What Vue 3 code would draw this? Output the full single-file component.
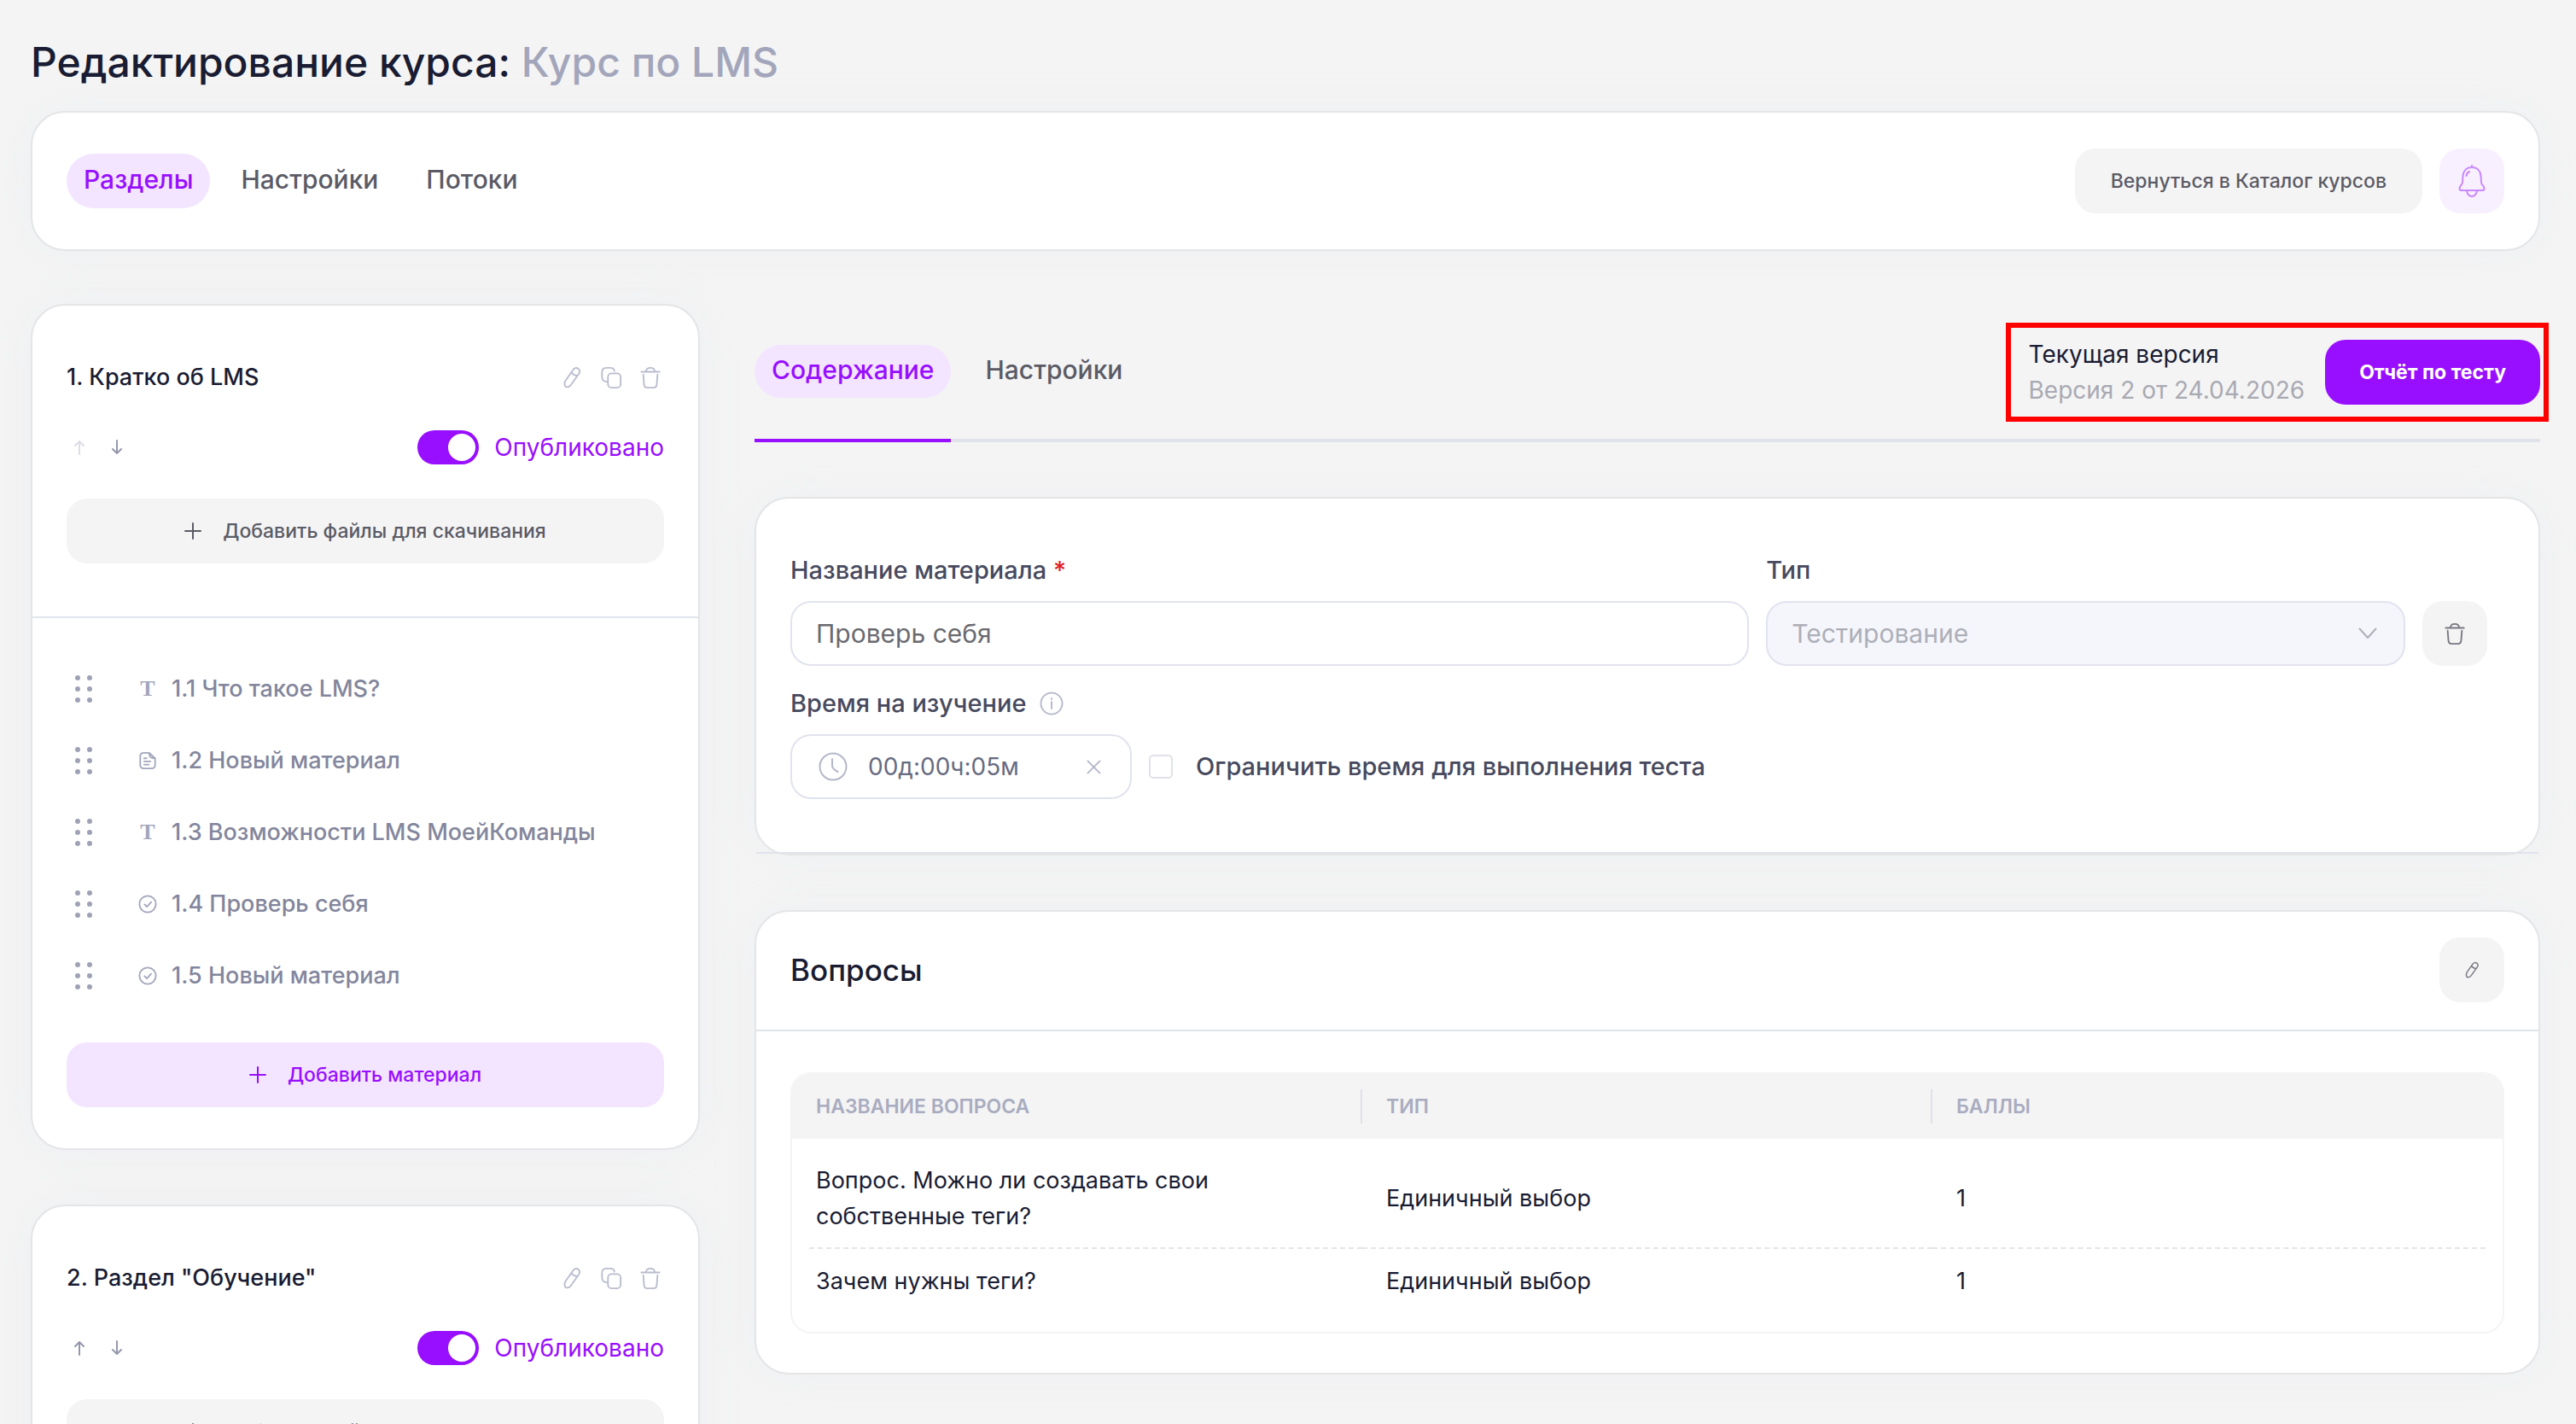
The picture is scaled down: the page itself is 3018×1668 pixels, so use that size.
<!-- CourseEditor.vue -->
<template>
<div class="page">
    <!-- Иконки -->
    <svg class="sprite" aria-hidden="true">
        <symbol id="i-pencil" viewBox="0 0 24 28">
            <path d="M13.5 4.5C15 2 18 1.500 20 3c2.200 1.500 2.500 4 1 6.200L10.500 24c-1.500 1.800-4 2.500-6.500 2-1.500-3-1.500-5.500-.3-7.500zM11.500 7.500c1.500 2.800 4 4.300 7.500 4.300" />
        </symbol>
        <symbol id="i-copy" viewBox="0 0 28 28">
            <rect x="10" y="9" width="16" height="18" rx="4.500" />
            <path d="M9.500 19.500H8.500C4.500 19.500 2.500 17 2.500 13.500V7.500C2.500 4 4.500 2 8 2h5c3.500 0 5 1.500 5 4" />
        </symbol>
        <symbol id="i-trash" viewBox="0 0 28 28">
            <path d="M2.500 7h23M8.500 7C8.500 3.500 10.500 2 14 2s5.500 1.500 5.500 5M5 10.500l1 12.500c.3 3 1.500 4 4 4h8c2.500 0 3.700-1 4-4l1-12.500" />
        </symbol>
        <symbol id="i-up" viewBox="0 0 16 18">
            <path d="M8 17V2M3 7l5-5 5 5" />
        </symbol>
        <symbol id="i-down" viewBox="0 0 16 18">
            <path d="M8 1v15M3 11l5 5 5-5" />
        </symbol>
        <symbol id="i-plus" viewBox="0 0 20 20">
            <path d="M10 1v18M1 10h18" />
        </symbol>
        <symbol id="i-grip" viewBox="0 0 22 36">
            <g fill="currentColor" stroke="none">
                <circle cx="4" cy="5" r="3" /><circle cx="18" cy="5" r="3" />
                <circle cx="4" cy="18" r="3" /><circle cx="18" cy="18" r="3" />
                <circle cx="4" cy="31" r="3" /><circle cx="18" cy="31" r="3" />
            </g>
        </symbol>
        <symbol id="i-file" viewBox="0 0 24 24">
            <path d="M14 2H7C4 2 2.500 3.500 2.500 6.500v11C2.500 20.500 4 22 7 22h10c3 0 4.500-1.500 4.500-4.500V9zM14 2c0 5 1.500 7 7.500 7M7.500 9h3M7.500 13h8M7.500 17h6" />
        </symbol>
        <symbol id="i-check" viewBox="0 0 24 24">
            <circle cx="12" cy="12" r="10.500" />
            <path d="M8 12.500l3 3 5.500-6" />
        </symbol>
        <symbol id="i-bell" viewBox="0 0 32 38">
            <path d="M16 1v2M16 3C9.500 3 6 7.500 5.500 13L5 20.500C4.800 24 1.500 24.500 1.500 28c0 1.300.8 2 2.200 2h24.600c1.400 0 2.200-.7 2.200-2 0-3.500-3.300-4-3.500-7.500L26.500 13C26 7.500 22.500 3 16 3zM10 30.500c.8 4 3 6.500 6 6.500s5.200-2.500 6-6.500M9.500 13c.3-2.300 1.500-4 3.500-5" />
        </symbol>
        <symbol id="i-info" viewBox="0 0 28 28">
            <circle cx="14" cy="14" r="12.500" />
            <path d="M14 12v8M14 8v1" />
        </symbol>
        <symbol id="i-clock" viewBox="0 0 34 34">
            <circle cx="17" cy="17" r="15.500" />
            <path d="M16 8v8c0 3 1.500 4.500 6.500 7" />
        </symbol>
        <symbol id="i-close" viewBox="0 0 18 18">
            <path d="M1.500 1.500l15 15M16.500 1.500l-15 15" />
        </symbol>
        <symbol id="i-chevron" viewBox="0 0 22 14">
            <path d="M1.500 1.500L11 12l9.500-10.500" />
        </symbol>
    </svg>

    <h1 class="page-title">Редактирование курса: <span>Курс по LMS</span></h1>

    <header class="card topbar">
        <nav class="topbar-nav">
            <a v-for="(item, i) in menu" :key="item" href="#" class="pill" :class="{ active: i === 0 }">{{ item }}</a>
        </nav>
        <div class="topbar-actions">
            <button type="button" class="btn btn-grey">Вернуться в Каталог курсов</button>
            <button type="button" class="btn btn-icon btn-bell" aria-label="Уведомления">
                <svg class="icon-bell"><use href="#i-bell" /></svg>
            </button>
        </div>
    </header>

    <div class="layout">
        <aside class="sidebar">
            <section v-for="section in sections" :key="section.title" class="card section">
                <div class="section-head">
                    <div class="row">
                        <h2 class="section-title">{{ section.title }}</h2>
                        <div class="section-tools">
                            <button type="button" class="tool" aria-label="Изменить"><svg><use href="#i-pencil" /></svg></button>
                            <button type="button" class="tool" aria-label="Копировать"><svg><use href="#i-copy" /></svg></button>
                            <button type="button" class="tool" aria-label="Удалить"><svg><use href="#i-trash" /></svg></button>
                        </div>
                    </div>
                    <div class="row row-publish">
                        <div class="arrows">
                            <button type="button" class="arrow" :disabled="section.first" aria-label="Выше"><svg><use href="#i-up" /></svg></button>
                            <button type="button" class="arrow" aria-label="Ниже"><svg><use href="#i-down" /></svg></button>
                        </div>
                        <label class="switch">
                            <input v-model="section.published" type="checkbox" role="switch">
                            Опубликовано
                        </label>
                    </div>
                    <button type="button" class="btn btn-grey btn-wide">
                        <svg class="icon-plus"><use href="#i-plus" /></svg>
                        Добавить файлы для скачивания
                    </button>
                </div>
                <div class="section-body">
                    <ul class="materials">
                        <li v-for="item in section.materials" :key="item.name" class="material">
                            <svg class="grip"><use href="#i-grip" /></svg>
                            <span v-if="item.icon === 'text'" class="material-icon material-text">T</span>
                            <svg v-else class="material-icon"><use :href="'#i-' + item.icon" /></svg>
                            <a href="#">{{ item.name }}</a>
                        </li>
                    </ul>
                    <button type="button" class="btn btn-light btn-wide">
                        <svg class="icon-plus"><use href="#i-plus" /></svg>
                        Добавить материал
                    </button>
                </div>
            </section>
        </aside>

        <main class="content">
            <div class="tabs">
                <nav class="tabs-nav">
                    <div v-for="(tab, i) in tabs" :key="tab" class="tab" :class="{ current: i === 0 }">
                        <a href="#" class="pill" :class="{ active: i === 0 }">{{ tab }}</a>
                    </div>
                </nav>
                <div class="version">
                    <div class="version-text">
                        <div>Текущая версия</div>
                        <div class="version-date">Версия 2 от 24.04.2026</div>
                    </div>
                    <button type="button" class="btn btn-primary">Отчёт по тесту</button>
                </div>
            </div>

            <section class="card">
                <form class="form" @submit.prevent>
                    <div class="form-grid">
                        <div class="field">
                            <label for="name">Название материала <span class="required">*</span></label>
                            <input id="name" v-model="name" type="text" class="control">
                        </div>
                        <div class="field">
                            <label for="type">Тип</label>
                            <div class="control control-disabled">
                                <select id="type" disabled>
                                    <option>Тестирование</option>
                                </select>
                                <svg class="icon-chevron"><use href="#i-chevron" /></svg>
                            </div>
                        </div>
                        <button type="button" class="btn btn-grey btn-icon" aria-label="Удалить материал">
                            <svg class="icon-trash"><use href="#i-trash" /></svg>
                        </button>
                    </div>
                    <div class="field">
                        <div class="label-row">
                            <label for="time">Время на изучение</label>
                            <svg class="icon-info"><use href="#i-info" /></svg>
                        </div>
                        <div class="time-row">
                            <div class="control control-time">
                                <svg class="icon-clock"><use href="#i-clock" /></svg>
                                <input id="time" v-model="time" type="text">
                                <button type="button" class="clear" aria-label="Очистить"><svg><use href="#i-close" /></svg></button>
                            </div>
                            <label class="checkbox">
                                <input v-model="limited" type="checkbox">
                                Ограничить время для выполнения теста
                            </label>
                        </div>
                    </div>
                </form>
            </section>

            <section class="card">
                <div class="questions-head">
                    <h2>Вопросы</h2>
                    <button type="button" class="btn btn-grey btn-icon" aria-label="Изменить вопросы">
                        <svg class="icon-edit"><use href="#i-pencil" /></svg>
                    </button>
                </div>
                <div class="questions-body">
                    <div class="table-wrap">
                        <table>
                            <thead>
                                <tr>
                                    <th>Название вопроса</th>
                                    <th>Тип</th>
                                    <th>Баллы</th>
                                </tr>
                            </thead>
                            <tbody>
                                <tr v-for="q in questions" :key="q.text">
                                    <td>{{ q.text }}</td>
                                    <td>{{ q.type }}</td>
                                    <td>{{ q.points }}</td>
                                </tr>
                            </tbody>
                        </table>
                    </div>
                </div>
            </section>
        </main>
    </div>
</div>
</template>

<script setup>
import { ref } from 'vue'

const menu = ['Разделы', 'Настройки', 'Потоки']
const tabs = ['Содержание', 'Настройки']

const name = ref('Проверь себя')
const time = ref('00д:00ч:05м')
const limited = ref(false)

const sections = ref([
    {
        title: '1. Кратко об LMS',
        first: true,
        published: true,
        materials: [
            { name: '1.1 Что такое LMS?', icon: 'text' },
            { name: '1.2 Новый материал', icon: 'file' },
            { name: '1.3 Возможности LMS МоейКоманды', icon: 'text' },
            { name: '1.4 Проверь себя', icon: 'check' },
            { name: '1.5 Новый материал', icon: 'check' }
        ]
    },
    {
        title: '2. Раздел "Обучение"',
        first: false,
        published: true,
        materials: []
    }
])

const questions = [
    { text: 'Вопрос. Можно ли создавать свои собственные теги?', type: 'Единичный выбор', points: 1 },
    { text: 'Зачем нужны теги?', type: 'Единичный выбор', points: 1 }
]
</script>

<style>
body {
    background-color: #f4f4f4;
}
</style>

<style scoped>
* {
    box-sizing: border-box;
}

.page {
    height: 100vh;
    overflow: hidden;
    padding: 43px 42px 0 36px;
    font-family: Inter, "Liberation Sans", sans-serif;
    font-size: 28px;
    line-height: 42px;
    color: #191c32;
}

.sprite {
    display: none;
}

svg {
    display: block;
    flex: none;
    fill: none;
    stroke: currentColor;
    stroke-width: 2;
    stroke-linecap: round;
    stroke-linejoin: round;
}

button,
input,
select {
    font: inherit;
    color: inherit;
}

button {
    border: 0;
    padding: 0;
    background: none;
    cursor: pointer;
}

a {
    color: inherit;
    text-decoration: none;
}

h1,
h2 {
    margin: 0;
    font-weight: 500;
}

.page-title {
    margin-bottom: 27px;
    font-size: 48px;
    line-height: 60px;
}

.page-title span {
    color: #a3a6bb;
}

.card {
    background-color: #fff;
    border: 2px solid #e4e5e7;
    border-radius: 40px;
    box-shadow: 0 0 50px rgba(226, 232, 242, 0.3);
}

/* Кнопки */
.btn {
    display: flex;
    align-items: center;
    justify-content: center;
    height: 76px;
    padding: 0 40px;
    border-radius: 24px;
    font-size: 23px;
    font-weight: 500;
    white-space: nowrap;
}

.btn-grey {
    background-color: #f4f4f4;
    color: #5b5b66;
}

.btn-light {
    background-color: #f3e5ff;
    color: #980fff;
}

.btn-primary {
    background-color: #980fff;
    color: #fff;
    font-weight: 700;
}

.btn-wide {
    width: 100%;
    gap: 25px;
}

.btn-icon {
    width: 76px;
    padding: 0;
}

.btn-bell {
    background-color: #f8f0ff;
    color: #c987ff;
}

.icon-plus {
    width: 20px;
    height: 20px;
}

.icon-bell {
    width: 32px;
    height: 38px;
}

/* Верхняя панель */
.topbar {
    display: flex;
    align-items: center;
    justify-content: space-between;
    padding: 42px 40px;
}

.topbar-nav {
    display: flex;
    gap: 16px;
}

.topbar-actions {
    display: flex;
    gap: 20px;
}

.topbar-actions .btn-grey {
    padding: 0 42px;
}

.pill {
    display: flex;
    align-items: center;
    height: 64px;
    padding: 0 20px 4px;
    border-radius: 32px;
    font-size: 30px;
    font-weight: 500;
    color: #5b5b66;
}

.pill.active {
    background-color: #f3e5ff;
    color: #980fff;
}

.layout {
    display: grid;
    grid-template-columns: 784px 1fr;
    gap: 64px;
    align-items: start;
    margin-top: 62px;
}

.sidebar,
.content {
    display: flex;
    flex-direction: column;
    gap: 64px;
    min-width: 0;
}

/* Раздел курса */
.section-head {
    padding: 64px 40px 62px;
    border-bottom: 2px solid #e2e5ec;
}

.row {
    display: flex;
    align-items: center;
    justify-content: space-between;
    height: 40px;
}

.row-publish {
    margin: 42px 0 40px;
}

.section-title {
    font-size: 27px;
}

.section-tools {
    display: flex;
    gap: 18px;
    padding-right: 2px;
}

.tool {
    color: #b9bccd;
}

.tool svg {
    width: 28px;
    height: 26px;
}

.arrows {
    display: flex;
    gap: 28px;
    padding-left: 7px;
}

.arrow {
    color: #9497ac;
}

.arrow:disabled {
    color: #dcdde6;
}

.arrow svg {
    width: 16px;
    height: 18px;
}

.switch {
    display: flex;
    align-items: center;
    gap: 18px;
    color: #980fff;
}

.switch input {
    appearance: none;
    display: flex;
    justify-content: flex-start;
    width: 72px;
    height: 40px;
    margin: 0;
    padding: 4px;
    border-radius: 20px;
    background-color: #c9cbd8;
}

.switch input:checked {
    justify-content: flex-end;
    background-color: #980fff;
}

.switch input::before {
    content: "";
    width: 32px;
    height: 32px;
    border-radius: 50%;
    background-color: #fff;
}

.section-body {
    padding: 41px 40px 48px;
}

.materials {
    margin: 0 0 36px;
    padding: 0 0 0 9px;
    list-style: none;
}

.material {
    display: flex;
    align-items: center;
    height: 84px;
    font-size: 27px;
    font-weight: 500;
    color: #83869c;
}

.grip {
    width: 22px;
    height: 36px;
    color: #9fa2b6;
}

.material-icon {
    width: 22px;
    height: 22px;
    margin: 0 17px 0 53px;
    color: #a3a6bb;
}

.material-text {
    font-family: "Liberation Serif", serif;
    font-size: 26px;
    font-weight: 700;
    line-height: 22px;
    text-align: center;
}

/* Вкладки */
.tabs {
    display: flex;
    justify-content: space-between;
    padding-top: 38px;
    border-bottom: 4px solid #e1e3eb;
}

.tabs-nav {
    display: flex;
    gap: 20px;
}

.tab {
    padding-top: 10px;
    margin-bottom: -4px;
}

.tab.current {
    border-bottom: 4px solid #980fff;
}

.tab .pill {
    height: 62px;
}

.version {
    position: relative;
    display: flex;
    align-items: center;
    gap: 24px;
    margin-bottom: 36px;
}

/* Рамка выделяет версию и отчёт */
.version::before {
    content: "";
    position: absolute;
    inset: -16px -10px -16px -27px;
    border: 6px solid #f00;
    pointer-events: none;
}

.version-date {
    color: #a9a9b2;
}

/* Форма */
.form {
    display: flex;
    flex-direction: column;
    gap: 24px;
    padding: 64px 60px 62px 40px;
    border-bottom: 2px solid #e1e3eb;
}

.form-grid {
    display: grid;
    grid-template-columns: 3fr 2fr 76px;
    gap: 20px;
    align-items: end;
}

.field {
    display: flex;
    flex-direction: column;
    gap: 16px;
    min-width: 0;
}

.field label {
    font-size: 29px;
    font-weight: 500;
    line-height: 40px;
    color: #474a5e;
}

.required {
    color: #e01f26;
}

.control {
    display: flex;
    align-items: center;
    width: 100%;
    height: 76px;
    padding: 0 28px;
    border: 2px solid #e1e3ee;
    border-radius: 24px;
    background-color: #fff;
    font-size: 30px;
    color: #6a6a70;
    outline: none;
}

.control-disabled {
    background-color: #f5f6fb;
    color: #adafb8;
}

.control select {
    flex: 1;
    appearance: none;
    border: 0;
    padding: 0;
    background: none;
    opacity: 1;
}

.icon-chevron {
    width: 22px;
    height: 14px;
    margin-right: 3px;
    color: #adafb8;
}

.icon-trash {
    width: 26px;
    height: 28px;
    color: #777781;
}

.label-row {
    display: flex;
    align-items: center;
    gap: 16px;
}

.icon-info {
    width: 28px;
    height: 28px;
    color: #b9bccd;
}

.time-row {
    display: flex;
    align-items: center;
    gap: 20px;
}

.control-time {
    width: 400px;
    padding: 0 34px 0 31px;
    font-size: 28px;
    color: #676b80;
}

.control-time input {
    flex: 1;
    min-width: 0;
    margin-left: 24px;
    padding: 0;
    border: 0;
    background: none;
    outline: none;
}

.icon-clock {
    width: 34px;
    height: 34px;
    color: #b4b7c9;
}

.clear {
    color: #b4b7c9;
}

.clear svg {
    width: 17px;
    height: 17px;
}

.field .checkbox {
    display: flex;
    align-items: center;
    gap: 27px;
}

.checkbox input {
    appearance: none;
    width: 28px;
    height: 28px;
    margin: 0;
    border: 2px solid #e1e2e8;
    border-radius: 5px;
    background-color: #fff;
}

.checkbox input:checked {
    background-color: #980fff;
}

/* Вопросы */
.questions-head {
    display: flex;
    align-items: center;
    justify-content: space-between;
    padding: 30px 40px 32px;
    border-bottom: 2px solid #e1e4e9;
}

.questions-head h2 {
    font-size: 35px;
}

.icon-edit {
    width: 20px;
    height: 20px;
    color: #777781;
}

.questions-body {
    padding: 48px 40px 46px;
}

.table-wrap {
    overflow: hidden;
    border: 2px solid #f4f4f4;
    border-radius: 24px;
}

table {
    width: 100%;
    table-layout: fixed;
    border-spacing: 0;
}

th {
    height: 76px;
    padding: 0 28px;
    background-color: #f4f4f4;
    font-size: 23px;
    font-weight: 600;
    text-align: left;
    text-transform: uppercase;
    color: #a9acc0;
}

th:not(:last-child) {
    background-image: linear-gradient(#e0e1ea, #e0e1ea);
    background-position: right center;
    background-size: 2px 40px;
    background-repeat: no-repeat;
}

td {
    position: relative;
    padding: 17px 28px;
    font-size: 27px;
}

tr:first-child td {
    padding-top: 28px;
}

tr:last-child td {
    padding-bottom: 38px;
}

/* Пунктир между строками не доходит до краёв таблицы */
tr:not(:last-child) td::after {
    content: "";
    position: absolute;
    inset: auto 0 0 0;
    border-bottom: 2px dashed #e4e5e9;
}

tr:not(:last-child) td:first-child::after {
    left: 20px;
}

tr:not(:last-child) td:last-child::after {
    right: 20px;
}
</style>
